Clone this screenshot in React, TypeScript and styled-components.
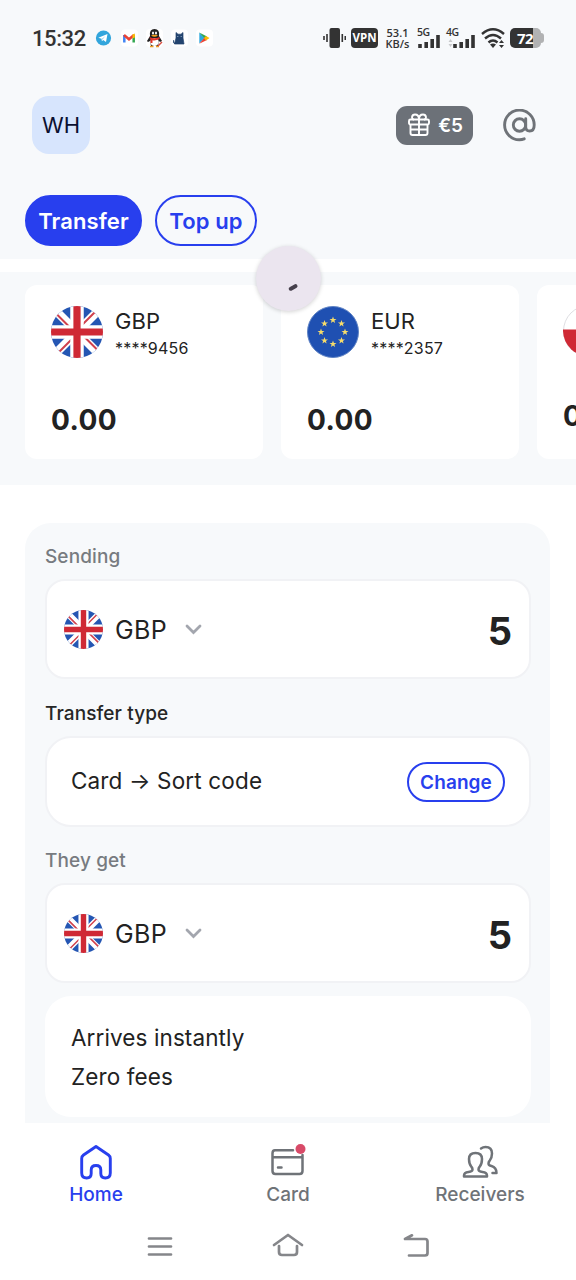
import React from "react";
import styled, { createGlobalStyle } from "styled-components";

const GlobalStyle = createGlobalStyle`
  * { box-sizing: border-box; }
  body { margin: 0; background: #fff; font-family: Inter, "Liberation Sans", sans-serif; color: #222; }
  svg { display: block; flex: none; }
`;

const blue = "#283fee";
const grey = "#6f7378";
const mist = "#f7f9fb";

const Screen = styled.div`
  width: 576px;
  height: 1280px;
  overflow: hidden;
  background: #fff;
  display: flex;
  flex-direction: column;
`;

const Top = styled.header`
  height: 259px;
  flex: none;
  background: ${mist};
`;

const StatusBar = styled.div`
  height: 76px;
  display: flex;
  align-items: center;
  justify-content: space-between;
  padding: 0 35px 0 32px;
`;

const StatusGroup = styled.div`
  display: flex;
  align-items: center;
`;

const Clock = styled.span`
  width: 63px;
  padding-top: 2px;
  font: 500 22px/26px Roboto, "Noto Sans", sans-serif;
  letter-spacing: -0.4px;
  color: #333;
  white-space: nowrap;
`;

const AppBadges = styled.div`
  display: flex;
  align-items: center;
  gap: 8px;
`;

const Vpn = styled.span`
  width: 27px;
  height: 20px;
  margin-left: 5px;
  border-radius: 4px;
  background: #333;
  color: #fff;
  font: 700 11.5px/20px "Open Sans", sans-serif;
  text-align: center;
`;

const Speed = styled.span`
  width: 25px;
  margin-left: 7px;
  display: flex;
  flex-direction: column;
  align-items: center;
  font: 600 11px/11px "Open Sans", sans-serif;
  color: #333;
  white-space: nowrap;
`;

const Signal = styled.span<{ $gap: number; $width: number }>`
  position: relative;
  width: ${(p) => p.$width}px;
  height: 20px;
  margin-left: ${(p) => p.$gap}px;
  display: flex;
  align-items: flex-end;
  justify-content: flex-end;
`;

const SignalLabel = styled.span`
  position: absolute;
  top: -1px;
  left: 0;
  font: 600 10.5px/11px "Open Sans", sans-serif;
  letter-spacing: -0.4px;
  color: #333;
`;

const WifiIcon = styled.svg`
  margin-left: 6px;
`;

const Battery = styled.span`
  position: relative;
  width: 31px;
  height: 20px;
  margin-left: 4px;
  border-radius: 5px;
  background: linear-gradient(90deg, #333 0 23px, #b1b2b3 23px);
  color: #fff;
  font: 700 15px/20px "Open Sans", sans-serif;
  letter-spacing: -0.6px;
  padding-left: 7px;
  &::after {
    content: "";
    position: absolute;
    right: -2.5px;
    top: 5px;
    width: 3px;
    height: 10px;
    border-radius: 0 3px 3px 0;
    background: #b1b2b3;
  }
`;

const Profile = styled.div`
  height: 98px;
  display: flex;
  align-items: center;
  padding: 0 40px 0 32px;
`;

const Avatar = styled.div`
  width: 58px;
  height: 58px;
  border-radius: 17px;
  background: #d7e5fd;
  color: #0b1030;
  font-size: 22px;
  line-height: 59px;
  text-align: center;
`;

const Reward = styled.button`
  width: 77px;
  height: 39px;
  margin-left: auto;
  margin-right: 30px;
  padding: 0 10px 0 12px;
  border: 0;
  border-radius: 11px;
  background: #6c7178;
  color: #fff;
  display: flex;
  align-items: center;
  justify-content: space-between;
  font: 600 19px/39px Inter, sans-serif;
`;

const Pills = styled.nav`
  display: flex;
  gap: 13px;
  padding: 21px 25px 0;
`;

const Pill = styled.button<{ $filled?: boolean; $width: number }>`
  width: ${(p) => p.$width}px;
  height: 51px;
  padding: 2px 0 0;
  border: 2px solid ${blue};
  border-radius: 26px;
  background: ${(p) => (p.$filled ? blue : "transparent")};
  color: ${(p) => (p.$filled ? "#fff" : blue)};
  font: 600 22px/45px Inter, sans-serif;
  letter-spacing: 0.1px;
`;

const Accounts = styled.section`
  position: relative;
  flex: none;
  height: 213px;
  margin-top: 13px;
  padding: 13px 0 0 25px;
  display: flex;
  gap: 18px;
  background: ${mist};
`;

const AccountCard = styled.article<{ $tight?: boolean }>`
  flex: none;
  width: 238px;
  height: 174px;
  padding: ${(p) => (p.$tight ? 20 : 21)}px 26px 0;
  border-radius: 12px;
  background: #fff;
`;

const AccountTop = styled.div`
  display: flex;
  gap: 12px;
`;

const AccountCode = styled.div`
  font-size: 22px;
  line-height: 30px;
  letter-spacing: 0.1px;
`;

const AccountMask = styled.div`
  font-size: 16px;
  line-height: 24px;
  letter-spacing: 0.2px;
`;

const Balance = styled.div<{ $gap: number }>`
  margin-top: ${(p) => p.$gap}px;
  font-weight: 700;
  font-size: 28px;
  line-height: 36px;
  letter-spacing: 0.4px;
`;

const Spinner = styled.div`
  position: absolute;
  left: 256px;
  top: -26px;
  width: 65px;
  height: 65px;
  border-radius: 50%;
  background: #ebe5ef;
  box-shadow: 0 1px 4px rgba(0, 0, 0, 0.18);
`;

const Panel = styled.main`
  flex: none;
  width: 525px;
  height: 600px;
  margin: 38px 0 0 25px;
  padding: 18px 19px 0 20px;
  border-radius: 26px 26px 0 0;
  background: ${mist};
`;

const Label = styled.div<{ $dark?: boolean; $gap?: number }>`
  margin-top: ${(p) => p.$gap ?? 0}px;
  font-size: 19px;
  font-weight: 500;
  line-height: 31px;
  letter-spacing: 0.1px;
  color: ${(p) => (p.$dark ? "#262626" : "#777b80")};
`;

const Field = styled.div<{ $height: number; $inset?: boolean }>`
  height: ${(p) => p.$height}px;
  margin-top: 7px;
  padding: ${(p) => (p.$inset ? "0 24px" : "0 17px")};
  display: flex;
  align-items: center;
  border: 2px solid #f1f2f5;
  border-radius: ${(p) => (p.$inset ? 26 : 20)}px;
  background: #fff;
`;

const FieldCode = styled.span`
  width: 70px;
  margin-left: 12px;
  padding-top: 2px;
  font-size: 25px;
  letter-spacing: 0.4px;
`;

const Amount = styled.span`
  margin-left: auto;
  padding-top: 3px;
  font-weight: 700;
  font-size: 38px;
  line-height: 46px;
`;

const Route = styled.span`
  padding-bottom: 2px;
  font-size: 22.5px;
  letter-spacing: 0.15px;
  white-space: nowrap;
`;

const ChangeButton = styled.button`
  width: 98px;
  height: 40px;
  margin-left: auto;
  padding: 1px 0 0;
  border: 2px solid ${blue};
  border-radius: 21px;
  background: #fff;
  color: ${blue};
  font: 600 19px/35px Inter, sans-serif;
  letter-spacing: 0.1px;
`;

const Summary = styled.div`
  height: 121px;
  margin-top: 13px;
  padding: 23px 26px;
  border-radius: 26px;
  background: #fff;
  font-size: 22.5px;
  letter-spacing: 0.1px;
  line-height: 38.5px;
`;

const Tabs = styled.nav`
  flex: none;
  height: 91px;
  display: grid;
  grid-template-columns: repeat(3, 192px);
  background: #fff;
`;

const Tab = styled.div<{ $active?: boolean }>`
  display: flex;
  flex-direction: column;
  align-items: center;
  padding-top: 20px;
  color: ${(p) => (p.$active ? blue : grey)};
  font-size: 19px;
  font-weight: 500;
  line-height: 24px;
`;

const SystemNav = styled.footer`
  height: 66px;
  display: flex;
  align-items: center;
  padding: 0 0 0 147px;
`;

function UkFlag({ size }: { size: number }) {
  const id = React.useId();
  return (
    <svg width={size} height={size} viewBox="0 0 52 52">
      <clipPath id={id}><circle cx="26" cy="26" r="26" /></clipPath>
      <g clipPath={`url(#${id})`}>
        <path fill="#2456b3" d="M0 0h52v52H0z" />
        <path stroke="#fff" strokeWidth="8.500" d="M0 0l52 52M52 0L0 52" />
        <path stroke="#d0404c" strokeWidth="2" d="M4 6.500l17 17M46 4L29 21M48 45.500L31 28.500M6 48L23 31" />
        <path stroke="#fff" strokeWidth="13.500" d="M26 0v52M0 26h52" />
        <path stroke="#cf2935" strokeWidth="7.200" d="M26 0v52M0 26h52" />
      </g>
    </svg>
  );
}

function EuFlag() {
  const star = "M0-3.600L.9-1.100H3.500L1.400.5 2.100 3 0 1.500-2.100 3-1.400.5-3.500-1.100H-.9z";
  return (
    <svg width="52" height="52" viewBox="0 0 52 52">
      <circle cx="26" cy="26" r="25.500" fill="#1f50b2" stroke="#5f83c4" />
      {Array.from({ length: 8 }, (_, i) => {
        const a = (i * Math.PI) / 4;
        return <path key={i} d={star} fill="#f7dc6a" transform={`translate(${26 + 12 * Math.sin(a)} ${26 - 12 * Math.cos(a)})`} />;
      })}
    </svg>
  );
}

function PlFlag() {
  return (
    <svg width="52" height="52" viewBox="0 0 52 52">
      <circle cx="26" cy="26" r="25.500" fill="#fff" stroke="#dedee2" />
      <path d="M0 24.500h52A26 26 0 0 1 0 26z" fill="#cf2935" />
    </svg>
  );
}

function Bars() {
  return (
    <svg width="22" height="14" viewBox="0 0 22 14">
      <path d="M2 14v-4M8.200 14V8M14.200 14V5M20 14V1" stroke="#333" strokeWidth="3.600" />
    </svg>
  );
}

function CurrencyField() {
  return (
    <Field $height={100}>
      <UkFlag size={39} />
      <FieldCode>GBP</FieldCode>
      <svg width="18" height="12" viewBox="0 0 18 12" fill="none" stroke="#a3a6ae" strokeWidth="2.800">
        <path d="M2 3l6.500 6.500L15 3" strokeLinecap="round" />
      </svg>
      <Amount>5</Amount>
    </Field>
  );
}

export default function App() {
  return (
    <Screen>
      <GlobalStyle />
      <Top>
        <StatusBar>
          <StatusGroup>
            <Clock>15:32</Clock>
            <AppBadges>
              <svg width="18" height="18" viewBox="0 0 18 18">
                <circle cx="8.500" cy="9" r="7.600" fill="#32a5dc" />
                <path d="M3.300 8.800L12.500 5l-1.500 8-2.800-2-1.300 1.200-.4-2.400z" fill="#fff" />
                <path d="M6.500 9.900L10.500 7l-3.200 3.700z" fill="#9bcdea" />
              </svg>
              <svg width="17" height="18" viewBox="0 0 17 18">
                <rect width="17" height="17" y=".5" rx="4" fill="#fff" />
                <path d="M3.300 13.500V6" stroke="#4285f4" strokeWidth="2.500" />
                <path d="M12.700 13.500V6" stroke="#34a853" strokeWidth="2.500" />
                <path d="M3 6l5 4.300L13 6" stroke="#ea4335" strokeWidth="2.500" fill="none" />
                <path d="M11.500 5.600l2.400-1v4l-2.400 1z" fill="#fbbc04" />
              </svg>
              <svg width="17" height="20" viewBox="0 0 17 20">
                <rect width="17" height="18" y="1" rx="4" fill="#fff" />
                <path d="M4 8Q3 1 8.500 1T13 8l3 5-2 1-1-1-1 5H5l-1-5-2 1-1-1z" fill="#222" />
                <ellipse cx="8.500" cy="14" rx="4.300" ry="4" fill="#fff" />
                <ellipse cx="7" cy="5" rx="1" ry="1.500" fill="#fff" /><ellipse cx="10" cy="5" rx="1" ry="1.500" fill="#fff" />
                <path d="M5 7.500q3.500-1.500 7 0-3.500 2.500-7 0z" fill="#f5a31b" />
                <path d="M3.500 9q5 2.500 10 0v2q-4 2-7 1.200V15H4.500v-3.500z" fill="#e3342b" />
                <path d="M4 18.500h3.500M10 18.500h3" stroke="#f09b20" strokeWidth="1.500" />
                <path d="M12 18l4-4" stroke="#d94f43" strokeWidth="1.500" />
              </svg>
              <svg width="17" height="18" viewBox="0 0 17 18">
                <rect width="17" height="17" y=".5" rx="4" fill="#fff" />
                <path d="M3.500 15l1.500-6V3.500l2 1.700h3L12 3.500V9l1 6zM4 15q-2.500-1-1.300-4" fill="#23446f" stroke="#23446f" strokeWidth=".7" />
                <path d="M6.300 7.500h1M9.700 7.500h1" stroke="#9ab2cc" />
              </svg>
              <svg width="17" height="18" viewBox="0 0 17 18">
                <rect width="17" height="17" y=".5" rx="4" fill="#fff" />
                <path d="M3.300 3.500v11L8.500 9z" fill="#2da8e0" />
                <path d="M3.300 3.500L11 7.500 8.500 9.500z" fill="#33a852" />
                <path d="M3.300 14.800L11 11 8.500 8.500z" fill="#ea4335" />
                <path d="M10 6.900l3.500 2.200L10 11.400 8 9z" fill="#fbbc04" />
              </svg>
            </AppBadges>
          </StatusGroup>
          <StatusGroup>
            <svg width="23" height="20" viewBox="0 0 23 20">
              <rect x="6.500" width="10.500" height="20" rx="2" fill="#333" />
              <path d="M4 6v8M1 8v4M19.300 6v8M22.300 8v4" stroke="#333" strokeWidth="1.600" />
            </svg>
            <Vpn>VPN</Vpn>
            <Speed><span>53.1</span><span>KB/s</span></Speed>
            <Signal $gap={7} $width={23}><SignalLabel>5G</SignalLabel><Bars /></Signal>
            <Signal $gap={6} $width={29}>
              <SignalLabel>4G</SignalLabel>
              <svg width="5" height="10" viewBox="0 0 5 10"><path d="M.5 4l2-3 2 3zM.5 6l2 3 2-3z" fill="#c9cacc" /></svg>
              <Bars />
            </Signal>
            <WifiIcon width="25" height="21" viewBox="0 0 25 21" fill="none" stroke="#333" strokeWidth="2.400">
              <path d="M1 6q11-9.500 22 0M4 10.500q8-7 16 0M7.500 14.500q4.500-4 9 0" />
              <path d="M9 16.500q3-2 6 0l-3 3.500z" fill="#333" stroke="none" />
              <path d="M18 15l2.500-3 2.500 3zM18 17l2.500 3 2.500-3z" fill="#333" stroke="none" />
            </WifiIcon>
            <Battery>72</Battery>
          </StatusGroup>
        </StatusBar>
        <Profile>
          <Avatar>WH</Avatar>
          <Reward>
            <svg width="22" height="24" viewBox="0 0 22 24" fill="none" stroke="#fff" strokeWidth="1.900" strokeLinejoin="round">
              <rect x="1" y="6.500" width="20" height="5" rx="1.500" />
              <path d="M2.500 11.500V20q0 2 2 2h13q2 0 2-2v-8.500M11 6.500V22M2.500 16.500h17" />
              <path d="M11 6.500C11 3 9 1.500 7 1.500 3.500 1.500 3 6.500 6 6.500M11 6.500c0-3.500 2-5 4-5 3.500 0 4 5 1 5" />
            </svg>
            <span>€5</span>
          </Reward>
          <svg width="33" height="33" viewBox="0 0 33 33" fill="none" stroke={grey} strokeWidth="2.900" strokeLinecap="round">
            <circle cx="16.500" cy="16" r="6.200" />
            <path d="M22.700 9.800v8.200q0 4 4 4 4.500 0 4.500-6A14.800 14.800 0 1 0 16.500 30.700q2.500 0 4.700-.9" />
          </svg>
        </Profile>
        <Pills>
          <Pill $filled $width={117}>Transfer</Pill>
          <Pill $width={102}>Top up</Pill>
        </Pills>
      </Top>

      <Accounts>
        <AccountCard>
          <AccountTop>
            <UkFlag size={52} />
            <div><AccountCode>GBP</AccountCode><AccountMask>****9456</AccountMask></div>
          </AccountTop>
          <Balance $gap={42}>0.00</Balance>
        </AccountCard>
        <AccountCard>
          <AccountTop>
            <EuFlag />
            <div><AccountCode>EUR</AccountCode><AccountMask>****2357</AccountMask></div>
          </AccountTop>
          <Balance $gap={42}>0.00</Balance>
        </AccountCard>
        <AccountCard $tight>
          <PlFlag />
          <Balance $gap={41}>0.00</Balance>
        </AccountCard>
        <Spinner>
          <svg width="65" height="65" viewBox="0 0 65 65">
            <path d="M34.700 42.800Q37.200 41.800 39.500 40.200" stroke="#46404c" strokeWidth="4" strokeLinecap="round" fill="none" />
          </svg>
        </Spinner>
      </Accounts>

      <Panel>
        <Label>Sending</Label>
        <CurrencyField />
        <Label $dark $gap={19}>Transfer type</Label>
        <Field $height={91} $inset>
          <Route>Card → Sort code</Route>
          <ChangeButton>Change</ChangeButton>
        </Field>
        <Label $gap={18}>They get</Label>
        <CurrencyField />
        <Summary>
          <div>Arrives instantly</div>
          <div>Zero fees</div>
        </Summary>
      </Panel>

      <Tabs>
        <Tab $active>
          <svg width="36" height="40" viewBox="0 0 36 40" fill="none" stroke={blue} strokeWidth="2.900" strokeLinejoin="round">
            <path d="M18 3.500L5.500 12Q3.700 13.300 3.700 15.500V30q0 5 5 5 4.500 0 4.500-4.500V27q0-4.500 4.800-4.500t4.800 4.500v3.500q0 4.500 4.500 4.500 5 0 5-5V15.500q0-2.200-1.800-3.500z" />
          </svg>
          <span>Home</span>
        </Tab>
        <Tab>
          <svg width="36" height="40" viewBox="0 0 36 40" fill="none" stroke={grey} strokeWidth="2.500" strokeLinecap="round">
            <path d="M23 7.300H5q-2.500 0-2.500 3V28q0 3 3 3h24q3 0 3-3V12M2.500 14.300h30M8 24.500h3.500" />
            <circle cx="30.500" cy="6" r="5" fill="#d84a68" stroke="none" />
          </svg>
          <span>Card</span>
        </Tab>
        <Tab>
          <svg width="36" height="40" viewBox="0 0 36 40" fill="none" stroke={grey} strokeWidth="2.500" strokeLinejoin="round" strokeLinecap="round">
            <path d="M2 33.500v-1q0-3 4.500-3.500 4-.5 4-2.500 0-1.500-1-2.500-2.500-3-2.500-8 0-6 6.500-6t6.500 6q0 5-2.500 8-1 1-1 2.500 0 2 4 2.500 4.500.5 4.500 3.500v1z" />
            <path d="M19 5.500q2-1.500 4.500-1.500 6.500 0 6.500 6.500 0 4.500-2.500 7.500-1 1-1 2.500 0 2 3 2.500Q34.500 24.500 34.500 30h-4" />
          </svg>
          <span>Receivers</span>
        </Tab>
      </Tabs>
      <SystemNav>
        <svg width="282" height="30" viewBox="0 0 282 30" fill="none" stroke="#85868a" strokeWidth="2.700" strokeLinecap="round" strokeLinejoin="round">
          <path d="M2 6.500h22M2 14.500h22M2 22.500h22" />
          <path d="M127 13l14-10 14 10M132 14v6q0 3 3 3h12q3 0 3-3v-6" />
          <path d="M265 3.300l-7 3.700h20q2.500 0 2.500 2.500v11.500q0 2.500-2.500 2.500h-16" />
        </svg>
      </SystemNav>
    </Screen>
  );
}
